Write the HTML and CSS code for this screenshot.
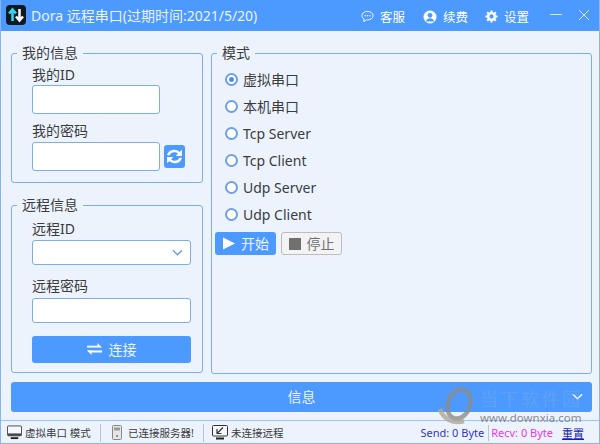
FILE: index.html
```html
<!DOCTYPE html>
<html lang="zh-CN">
<head>
  <meta charset="UTF-8">
  <meta name="viewport" content="width=device-width, initial-scale=1.0">
  <title>Dora 远程串口</title>
  <link rel="stylesheet" href="styles.css">
</head>
<body>
  <div class="window">

    <!-- 标题栏 -->
    <header class="titlebar">
      <div class="app-logo">
        <svg width="20" height="20" viewBox="0 0 20 20"><path d="M6.500 16V5M3 8.500l3.500-4 3.500 4" fill="none" stroke="#2fd4ee" stroke-width="2.600"/><path d="M13.500 4v11M10 11.500l3.500 4 3.500-4" fill="none" stroke="#f2f6fa" stroke-width="2.600"/></svg>
      </div>
      <span class="app-title">Dora 远程串口(过期时间:2021/5/20)</span>
      <nav class="top-menu">
        <a class="top-link">
          <svg width="13" height="13" viewBox="0 0 14 13"><path d="M7 1C3.700 1 1 3 1 5.600c0 1.500.9 2.800 2.300 3.600L3 12l2.900-1.900c.4.100.7.100 1.100.100 3.300 0 6-2 6-4.600S10.300 1 7 1z" fill="none" stroke="#fff" stroke-width="1"/><circle cx="4.500" cy="5.600" r=".8" fill="#fff"/><circle cx="7" cy="5.600" r=".8" fill="#fff"/><circle cx="9.500" cy="5.600" r=".8" fill="#fff"/></svg>
          客服
        </a>
        <a class="top-link">
          <svg width="14" height="14" viewBox="0 0 14 14"><circle cx="7" cy="7" r="6.500" fill="#fff"/><circle cx="7" cy="5.300" r="2.400" fill="#4c9aff"/><path d="M2.800 11.500C3.500 9.300 5 8.300 7 8.300s3.500 1 4.200 3.200z" fill="#4c9aff"/></svg>
          续费
        </a>
        <a class="top-link">
          <svg width="13" height="13" viewBox="0 0 14 14"><circle cx="7" cy="7" r="3.600" fill="none" stroke="#fff" stroke-width="2.600"/><path d="M7 .5v3M7 10.500v3M.5 7h3M10.500 7h3M2.400 2.400l2.100 2.100M9.500 9.500l2.100 2.100M2.400 11.600l2.100-2.100M9.500 4.500l2.100-2.100" stroke="#fff" stroke-width="2.200"/></svg>
          设置
        </a>
      </nav>
      <div class="win-buttons">
        <svg width="12" height="12" viewBox="0 0 12 12"><path d="M0 5.500h12" stroke="#d8e8ff" stroke-width="1"/></svg>
        <svg width="12" height="12" viewBox="0 0 12 12"><path d="M1 1l10 10M11 1L1 11" stroke="#d8e8ff" stroke-width="1"/></svg>
      </div>
    </header>

    <main class="content">
      <div class="left-col">
        <!-- 我的信息 -->
        <fieldset class="group my-info">
          <legend>我的信息</legend>
          <label class="field-label">我的ID</label>
          <input class="text-input short" type="text">
          <label class="field-label second">我的密码</label>
          <div class="pass-row">
            <input class="text-input short" type="text">
            <button class="refresh-btn">
              <svg width="21" height="21" viewBox="0 0 17 17"><path d="M2.500 7.500C3 4.800 5.400 3 8.300 3c1.700 0 3.200.7 4.200 1.800L14.500 3v5h-5l1.700-1.700c-.7-.8-1.700-1.200-2.900-1.200-1.700 0-3.100 1-3.600 2.400zM14.500 9.500c-.5 2.700-2.900 4.500-5.800 4.500-1.700 0-3.200-.7-4.200-1.800L2.500 14V9h5l-1.700 1.700c.7.8 1.700 1.200 2.900 1.200 1.700 0 3.100-1 3.600-2.400z" fill="#fff"/></svg>
            </button>
          </div>
        </fieldset>

        <!-- 远程信息 -->
        <fieldset class="group remote-info">
          <legend>远程信息</legend>
          <label class="field-label">远程ID</label>
          <div class="combo">
            <svg width="11" height="7" viewBox="0 0 12 7"><path d="M1 1l5 5 5-5" fill="none" stroke="#6f9fd8" stroke-width="1.500"/></svg>
          </div>
          <label class="field-label third">远程密码</label>
          <input class="text-input wide" type="text">
          <button class="connect-btn">
            <svg width="15" height="12" viewBox="0 0 15 12"><path d="M0 2.800h10.500V0L15 4.500H0zM15 7.500H4.500V12L0 7.500z" fill="#fff"/><path d="M0 7.500h15v2H3z" fill="#fff"/></svg>
            连接
          </button>
        </fieldset>
      </div>

      <!-- 模式 -->
      <fieldset class="group mode">
        <legend>模式</legend>
        <ul class="radio-list">
          <li class="radio checked">虚拟串口</li>
          <li class="radio">本机串口</li>
          <li class="radio">Tcp Server</li>
          <li class="radio">Tcp Client</li>
          <li class="radio">Udp Server</li>
          <li class="radio">Udp Client</li>
        </ul>
        <div class="mode-buttons">
          <button class="start-btn">
            <svg width="13" height="13" viewBox="0 0 13 13"><path d="M1 .5l12 6-12 6z" fill="#fff"/></svg>
            <span class="btn-text">开始</span>
          </button>
          <button class="stop-btn">
            <svg width="12" height="12" viewBox="0 0 12 12"><rect width="12" height="12" fill="#707070"/></svg>
            <span class="btn-text">停止</span>
          </button>
        </div>
      </fieldset>
    </main>

    <div class="info-bar">
      信息
      <svg class="info-arrow" width="11" height="7" viewBox="0 0 12 7"><path d="M1 1l5 5 5-5" fill="none" stroke="#fff" stroke-width="1.500"/></svg>
    </div>

    <!-- 状态栏 -->
    <footer class="statusbar">
      <span class="status-item first">
        <svg width="15" height="15" viewBox="0 0 16 15"><rect x=".5" y=".5" width="15" height="10.500" rx="1" fill="#f4f8fd" stroke="#444"/><rect x="1" y="8.500" width="14" height="2.500" fill="#444"/><path d="M4 13.500h8" stroke="#222" stroke-width="2"/></svg>
        虚拟串口 模式
      </span>
      <span class="status-item second">
        <svg width="10" height="15" viewBox="0 0 10 15"><rect x=".5" y=".5" width="9" height="14" rx="1" fill="#e6e6e6" stroke="#888"/><rect x="2" y="2.500" width="6" height="3" fill="#9a9a9a"/><circle cx="5" cy="11" r="1" fill="#777"/></svg>
        已连接服务器!
      </span>
      <span class="status-item third">
        <svg width="16" height="15" viewBox="0 0 16 15"><rect x=".5" y=".5" width="15" height="10.500" rx="1" fill="#f4f8fd" stroke="#333"/><path d="M5 8.500l6-6M5 4v4.500h4.500" fill="none" stroke="#333" stroke-width="1.200"/><path d="M4 13.500h8" stroke="#222" stroke-width="2"/></svg>
        未连接远程
      </span>
      <span class="traffic">
        <span class="send">Send: 0 Byte</span>
        <span class="recv">Recv: 0 Byte</span>
        <a class="reset">重置</a>
      </span>
    </footer>

    <!-- 角标 -->
    <div class="stamp">
      <svg width="38" height="38" viewBox="0 0 38 38"><ellipse cx="21" cy="17" rx="11" ry="15" transform="rotate(20 21 17)" fill="none" stroke="#8c8c8c" stroke-width="4.500" opacity=".8"/><path d="M2 22c3 10 13 15 24 12" fill="none" stroke="#b0a898" stroke-width="4.500" opacity=".8"/></svg>
      <div class="stamp-text">
        <span class="stamp-name">当下软件园</span>
        <span class="stamp-url">www.downxia.com</span>
      </div>
    </div>
  </div>
</body>
</html>
```
FILE: styles.css
```css
*, *::before, *::after {
  box-sizing: border-box;
}

body {
  margin: 0;
  font-family: "Noto Sans", "Noto Sans CJK SC", sans-serif;
  font-size: 14px;
  color: #3c3c3c;
}

.window {
  position: relative;
  width: 600px;
  height: 444px;
  display: flex;
  flex-direction: column;
  background-color: #ecf3fd;
  border: 1px solid #8ab6f0;
  border-top: none;
  overflow: hidden;
}

/* 标题栏 */
.titlebar {
  height: 31px;
  margin: 0 -1px;
  padding: 0 10px 1px 6px;
  flex-shrink: 0;
  display: flex;
  align-items: center;
  background-color: #4c9aff;
  color: #fff;
}

.app-logo {
  width: 20px;
  height: 20px;
  display: flex;
  background-color: #101820;
  border-radius: 4px;
}

.app-title {
  margin-left: 5px;
  font-size: 14px;
  color: #eaf3ff;
}

.top-menu {
  margin-left: auto;
  margin-top: 3px;
  display: flex;
  gap: 14px;
}

.top-link {
  width: 48px;
  display: flex;
  align-items: center;
  gap: 6px;
  font-size: 12.500px;
  white-space: nowrap;
}

.win-buttons {
  margin-left: 17px;
  display: flex;
  gap: 16px;
}

/* 主体 */
.content {
  height: 331px;
  margin-top: 12px;
  padding: 0 7px 0 10px;
  flex-shrink: 0;
  display: grid;
  grid-template-columns: 192px 381px;
  column-gap: 8px;
}

.left-col {
  display: flex;
  flex-direction: column;
  gap: 12px;
}

.group {
  margin: 0;
  padding: 0 20px;
  min-width: 0;
  border: 1px solid #7dadea;
  border-radius: 3px;
}

.group legend {
  margin-left: -15px;
  padding: 0 5px;
  font-size: 14px;
  line-height: 20px;
}

.my-info {
  height: 140px;
}

.remote-info {
  height: 178px;
}

.field-label {
  display: block;
  line-height: 20px;
}

.my-info .field-label {
  margin-top: 2px;
}

.my-info .field-label.second {
  margin-top: 7px;
  padding-bottom: 1px;
}

.remote-info .field-label {
  margin-top: 4px;
  padding-bottom: 1px;
}

.remote-info .field-label.third {
  margin-top: 11px;
  padding-bottom: 2px;
}

.text-input {
  display: block;
  height: 29px;
  padding: 0 6px;
  background-color: #fff;
  border: 1px solid #7dadea;
  border-radius: 3px;
  outline: none;
}

.text-input.short {
  width: 128px;
}

.text-input.wide {
  width: 159px;
  height: 25px;
}

.pass-row {
  display: flex;
  align-items: center;
  gap: 4px;
}

.refresh-btn {
  width: 23px;
  height: 23px;
  padding: 0;
  display: flex;
  align-items: center;
  justify-content: center;
  background-color: #4c9aff;
  border: none;
  border-radius: 3px;
}

.combo {
  width: 159px;
  height: 25px;
  padding-right: 7px;
  display: flex;
  align-items: center;
  justify-content: flex-end;
  background-color: #fff;
  border: 1px solid #7dadea;
  border-radius: 3px;
}

.connect-btn {
  width: 159px;
  height: 27px;
  margin-top: 13px;
  padding: 0 0 2px;
  display: flex;
  align-items: center;
  justify-content: center;
  gap: 7px;
  font-family: inherit;
  font-size: 14px;
  color: #eaf3ff;
  background-color: #4c9aff;
  border: none;
  border-radius: 3px;
}

/* 模式 */
.mode {
  height: 331px;
  padding: 0 3px;
}

.mode legend {
  margin-left: 2px;
}

.radio-list {
  list-style-type: none;
  margin: 3px 0 0;
  padding: 0;
}

.radio {
  height: 27px;
  padding-left: 28px;
  position: relative;
  line-height: 27px;
}

.radio::before {
  content: "";
  position: absolute;
  left: 10px;
  top: 7px;
  width: 13px;
  height: 13px;
  background-color: #fff;
  border: 2px solid #6f9fe6;
  border-radius: 50%;
}

.radio.checked::after {
  content: "";
  position: absolute;
  left: 14px;
  top: 11px;
  width: 5px;
  height: 5px;
  background-color: #4c8ff0;
  border-radius: 50%;
}

.mode-buttons {
  margin-top: 4px;
  display: flex;
  gap: 5px;
}

.start-btn, .stop-btn {
  width: 61px;
  height: 23px;
  padding: 0;
  display: flex;
  align-items: center;
  justify-content: center;
  gap: 6px;
  font-family: inherit;
  font-size: 14px;
  border-radius: 3px;
}

.btn-text {
  margin-top: -2px;
}

.start-btn {
  color: #eaf3ff;
  background-color: #4c9aff;
  border: none;
}

.stop-btn {
  color: #707070;
  background-color: #f3f3f3;
  border: 1px solid #bdbdbd;
}

/* 信息 */
.info-bar {
  height: 30px;
  margin: 8px 7px 0 10px;
  padding-bottom: 2px;
  flex-shrink: 0;
  position: relative;
  display: flex;
  align-items: center;
  justify-content: center;
  color: #eaf3ff;
  background-color: #4c9aff;
  border-radius: 3px;
}

.info-arrow {
  position: absolute;
  right: 9px;
  top: 11px;
}

/* 状态栏 */
.statusbar {
  height: 24px;
  margin-top: 8px;
  flex-shrink: 0;
  display: flex;
  align-items: center;
  font-size: 11px;
  border-top: 1px solid #9fc3f2;
}

.status-item {
  height: 18px;
  display: flex;
  align-items: center;
  gap: 3px;
  font-size: 10.500px;
  white-space: nowrap;
  border-right: 1px solid #b9c4d2;
}

.status-item.first {
  width: 100px;
  padding-left: 6px;
}

.status-item.second {
  width: 103px;
  padding-left: 11px;
  gap: 6px;
}

.status-item.third {
  padding-left: 8px;
  border-right: none;
}

.traffic {
  margin-left: auto;
  padding-right: 15px;
  display: flex;
  gap: 2px;
}

.send {
  padding-right: 4px;
  color: #3333cc;
  border-right: 1px solid #b9c4d2;
}

.recv {
  color: #ee33ee;
}

.reset {
  margin-left: 7px;
  color: #1a1ab8;
  text-decoration: underline;
}

/* 角标覆盖在信息栏上 */
.stamp {
  position: absolute;
  left: 437px;
  top: 387px;
  display: flex;
  gap: 4px;
  pointer-events: none;
}

.stamp-text {
  display: flex;
  flex-direction: column;
}

.stamp-name {
  font-size: 18px;
  line-height: 24px;
  letter-spacing: 2.500px;
  color: rgba(130, 170, 220, 0.4);
}

.stamp-url {
  font-size: 11.500px;
  line-height: 14px;
  color: rgba(110, 110, 110, 0.8);
}
```
